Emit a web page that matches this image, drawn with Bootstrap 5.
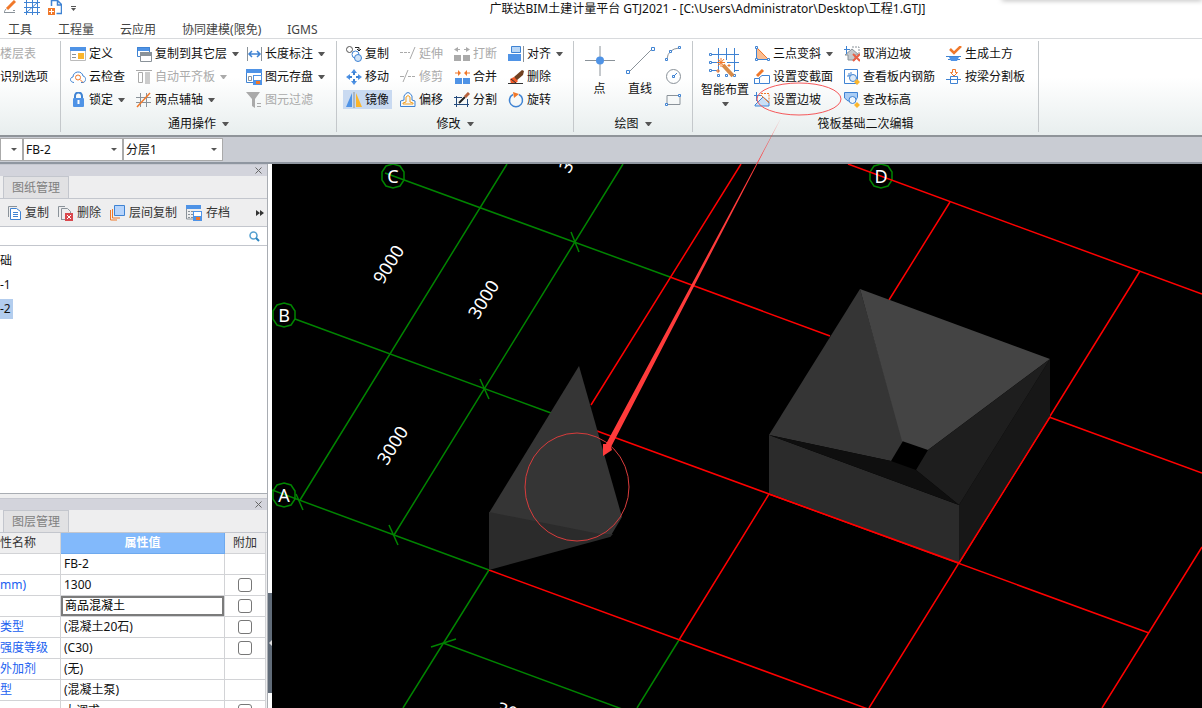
<!DOCTYPE html>
<html lang="zh-CN">
<head>
<meta charset="utf-8">
<meta name="viewport" content="width=device-width, initial-scale=1">
<title>广联达BIM土建计量平台 GTJ2021</title>
<link href="https://cdn.jsdelivr.net/npm/bootstrap@5.3.0/dist/css/bootstrap.min.css" rel="stylesheet">
<style>
  :root { --edge: #c3c6cd; --blue: #3f83d3; --orange: #f0782a; --slate: #8a9299; }
  body { font-family: "Noto Sans", "Noto Sans CJK SC", sans-serif; font-size: 12px; line-height: 16px; color: #111; background: #fff; }
  button { font: inherit; color: inherit; background: none; border: 0; padding: 0; white-space: nowrap; }
  button:disabled { color: #aaa; }
  svg { display: block; flex: none; fill: none; }
  .b { stroke: var(--blue); } .o { stroke: var(--orange); } .g { stroke: var(--slate); }
  .fb { fill: #4f93e6; } .fo { fill: var(--orange); } .fg { fill: var(--slate); } .fy { fill: #fbb52c; }
  .fw { fill: #fff; }
  .tri { width: 7px; border: solid transparent; border-width: 4px 3px 0; border-top-color: #555; flex: none; }
  :disabled .tri { border-top-color: #aaa; }

  .app-title { height: 18px; }
  .app-title h1 { font-size: 12px; line-height: 18px; padding-left: 136px; margin: 0; white-space: nowrap; }
  .app-tabs { height: 20px; gap: 26px; padding-left: 8px; }
  .app-tabs a { color: #444; text-decoration: none; line-height: 23px; white-space: nowrap; }
  .corner-shade { width: 200px; height: 2px; top: -2px; right: 0; box-shadow: 0 0 5px rgba(0,0,0,.5); }

  .ribbon { height: 99px; padding: 2px 0 3px; border-top: 1px solid #d8dadd; border-bottom: 2px solid #8f9499; background: linear-gradient(#fff 40%, #e8eeee); }
  .tool-group { border-right: 1px solid #c4c8cb; padding: 1px 6px 0; flex: none; }
  .tool-grid { display: grid; grid-auto-rows: 23px; align-items: center; }
  .tool-grid button { display: flex; align-items: center; gap: 3px; height: 19px; padding: 0 3px; justify-self: start; }
  .tool-grid button.on { background: #c9daf1; }
  .tri { margin-left: 2px; }
  .group-name { height: 26px; display: flex; align-items: center; justify-content: center; gap: 4px; }
  .tall { display: flex; flex-direction: column; align-items: center; }

  .combo-bar { height: 27px; background: #c9ccd3; border-bottom: 2px solid #8f96a0; padding-top: 1px; }
  .combo-bar select { height: 23px; border: 1px solid #aaa; border-radius: 0; padding: 0 2px; color: #111; font: inherit; appearance: none;
    background: #fff url("data:image/svg+xml,%3Csvg xmlns='http://www.w3.org/2000/svg' width='6' height='3'%3E%3Cpath d='M0 0h6L3 3z' fill='%23555'/%3E%3C/svg%3E") no-repeat right 5px center; }

  .side { width: 268px; border-right: 1px solid #a9adb3; background: #eeeeef; }
  .dock-bar { height: 12px; background: #d3d4dc; border-top: 1px solid #c6c8d0; padding-right: 5px; }
  .dock-tabs { height: 23px; padding-left: 3px; border-bottom: 1px solid var(--edge); }
  .dock-tabs button { height: 22px; width: 66px; background: #e1e1e3; border: solid var(--edge); border-width: 1px 1px 0; color: #808080; }
  .list-tools { height: 28px; border-bottom: 1px solid var(--edge); padding: 1px 3px 0 8px; color: #333; gap: 9px; }
  .list-tools button { display: flex; align-items: center; gap: 4px; }
  .find { height: 19px; border-bottom: 1px solid var(--edge); background: #fff; padding-right: 7px; }
  .find input { border: 0; outline: 0; height: 17px; font: inherit; }
  .parts { height: 248px; border-bottom: 1px solid #a9adb3; background: #fff; padding-top: 3px; }
  .parts li { height: 24px; display: flex; align-items: center; }
  .parts span { line-height: 20px; padding-right: 2px; }
  .parts .on { background: #b3cdee; }
  .props { border-collapse: separate; border-spacing: 0; width: 266px; table-layout: fixed; background: #fff; margin: 0; }
  .props th, .props td { height: 21px; padding: 0; line-height: 20px; border: solid #d2d3d6; border-width: 0 1px 1px 0; white-space: nowrap; overflow: hidden; font-weight: 400; }
  .props thead th { background: #eeeeef; text-align: center; color: #333; }
  .props thead .picked { background: #82b9fb; color: #fff; font-weight: 700; border-color: #6ea9ee; }
  .props tbody th { color: #2060f0; text-align: left; }
  .props td:nth-child(2) { padding-left: 3px; }
  .props td.editing { padding: 0; }
  .editing input { width: 100%; height: 20px; border: 2px solid #7b7b7b; padding: 0 2px; font: inherit; display: block; outline: 0; border-radius: 0; }
  .props .form-check-input { display: block; width: 14px; height: 14px; margin: 0 auto; border: 1px solid #777; border-radius: 3px; }
  .splitter { width: 4px; background: #fff; }
  .splitter button { height: 100px; width: 4px; margin-bottom: 15px; background: #606b78; }
  .scene { background: #000; }
  .scene text { fill: #fff; font-size: 18px; text-anchor: middle; }
  .axis { stroke: #008400; stroke-width: 1.5; }
  .grid-red { stroke: #f00; stroke-width: 1.5; }
  .markup { inset: 0; width: 100%; height: 100%; pointer-events: none; }
</style>
<script src="https://cdn.jsdelivr.net/npm/bootstrap@5.3.0/dist/js/bootstrap.bundle.min.js"></script>
</head>
<body class="vh-100 d-flex flex-column overflow-hidden position-relative">

<header class="flex-shrink-0">
  <div class="app-title d-flex">
    <div class="d-flex align-items-start gap-2 ps-1">
      <button aria-label="编辑"><svg width="12" height="15"><path class="o" stroke-width="3" d="M3 9l8-8"/><path class="g" d="M0 12.500h11M0 12l2-3M9 10.500h2"/></svg></button>
      <button aria-label="轴网"><svg width="16" height="15" class="b"><path d="M2.500 0v15M8.500 0v15M13.500 0v15M0 2.500h16M0 7.500h16M0 12.500h16M3 12L14 2"/></svg></button>
      <button aria-label="新建"><svg width="14" height="15"><path class="b" d="M3.500 6V.5h6l4 4v9h-5M9.500 0v5h4" stroke-width="1.500"/><path class="fo" d="M0 8h7v7H0z"/><path stroke="#fff" d="M1 11.500h5M3.500 9v5"/></svg></button>
      <button aria-label="自定义"><svg width="7" height="12"><path stroke="#555" d="M1 6.500h5"/><path fill="#555" d="M1 8h5l-2.500 3z"/></svg></button>
    </div>
    <h1 class="flex-grow-1 text-center fw-normal">广联达BIM土建计量平台 GTJ2021 - [C:\Users\Administrator\Desktop\工程1.GTJ]</h1>
  </div>
  <nav class="app-tabs d-flex">
    <a href="#">工具</a><a href="#">工程量</a><a href="#">云应用</a><a href="#">协同建模(限免)</a><a href="#">IGMS</a>
  </nav>
  <div class="corner-shade position-absolute"></div>

  <div class="ribbon d-flex overflow-hidden">
    <section class="tool-group overflow-hidden" style="width:61px;padding-left:0">
      <div class="tool-grid" style="margin-left:-3px">
        <button disabled>楼层表</button>
        <button>识别选项</button>
      </div>
    </section>

    <section class="tool-group" style="width:276px">
      <div class="tool-grid" style="grid-template-columns:66px 110px auto">
        <button><svg width="16" height="16"><path d="M.5 4v10.500h15V4" stroke="#bbb"/><path class="fb" d="M0 1h16v4H0z"/><path class="g" d="M2 8.500h4M2 11.500h4"/><path class="fy" d="M8 7h6v6H8z"/></svg>定义</button>
        <button><svg width="16" height="16"><path class="fb" d="M1 1h13v4H1z"/><path class="b" d="M1.500 1.500h12v9h-12z"/><path class="fw g" d="M4.500 6.500h11v9h-11z"/><path class="fg" d="M4 6h12v4H4z"/></svg>复制到其它层<span class="tri"></span></button>
        <button><svg width="16" height="16"><path class="g" d="M1.500 1v14M15.500 1v14"/><path class="b" d="M3 8h11M6 5L3 8l3 3M11 5l3 3-3 3" stroke-width="1.500"/></svg>长度标注<span class="tri"></span></button>

        <button><svg width="16" height="16"><path class="b" d="M4 13.500C-1 13 0 8 3 8c0-6 9-7 10-1 4 1 3 6 0 6.500h-2"/><circle class="o" cx="8" cy="8.500" r="2.500"/><path class="o" d="M10 10.500l3 3"/></svg>云检查</button>
        <button disabled><svg width="16" height="16" stroke="#aaa"><path d="M0 1.500h16M2.500 3.500h4v10h-4z"/><path d="M9 3h5v12H9z" fill="#ccc" stroke="none"/></svg>自动平齐板<span class="tri"></span></button>
        <button><svg width="16" height="16"><path class="b fw" d="M.5 1.500h15v12H.5z"/><path class="fb" d="M0 0h16v4H0z"/><path class="g" d="M2.500 7.500h3v4h-3z"/><path class="fb" d="M7 6h9v10H7z"/><path class="fw" d="M8 7h7v4H8z"/><path class="fo" d="M10 12h4v3h-4z"/></svg>图元存盘<span class="tri"></span></button>

        <button><svg width="16" height="16"><path class="b" stroke-width="2" d="M5 7V4a3 3 0 0 1 7 0v3"/><rect class="fb" x="3" y="6" width="11" height="9" rx="1"/><path stroke="#fff" stroke-width="2" d="M8.500 8v4"/></svg>锁定<span class="tri"></span></button>
        <button><svg width="16" height="16"><path class="g" d="M4.500 1v14M10.500 1v14M0 5.500h15M0 10.500h15"/><path class="o" d="M1 15L14 1" stroke-width="1.500"/></svg>两点辅轴<span class="tri"></span></button>
        <button disabled><svg width="16" height="16"><path fill="#aaa" d="M0 0h14L9 7v9l-3-2V7z"/><path stroke="#aaa" d="M11 11.500h4M11 14.500h4"/></svg>图元过滤</button>
      </div>
      <div class="group-name">通用操作<span class="tri"></span></div>
    </section>

    <section class="tool-group" style="width:237px">
      <div class="tool-grid" style="grid-template-columns:repeat(3,54px) auto">
        <button><svg width="16" height="16"><circle stroke="#555" cx="3.500" cy="3.500" r="3"/><circle class="b" cx="9.500" cy="8.500" r="3.500"/><circle cx="12" cy="12" r="3.500" class="b" fill="#cfe2f7"/><path stroke="#222" d="M9 1.500h4v3M11 3l2 2 2-2"/></svg>复制</button>
        <button disabled><svg width="16" height="16" stroke="#aaa"><path d="M0 6.500h10" stroke-dasharray="3 1"/><path d="M10 13l5-12"/></svg>延伸</button>
        <button disabled><svg width="16" height="16"><path fill="#aaa" d="M0 9h7v6H0zM9 9h7v6H9zM4 1v5L0 3.500zM12 1v5l4-2.500z"/><path stroke="#aaa" d="M3 3.500h3M10 3.500h3"/></svg>打断</button>
        <button><svg width="16" height="16"><path class="fb" d="M0 8h13v7H0z"/><path class="b" fill="#b8d6f6" d="M3.500.5h9v6h-9z"/><path class="g" d="M15.500 0v16"/></svg>对齐<span class="tri"></span></button>

        <button><svg width="16" height="16"><path class="fb" d="M8 0l3 4H5zM8 16l3-4H5zM0 8l4-3v6zM16 8l-4-3v6z"/><path class="b" stroke-width="2" d="M8 3v3M8 10v3M3 8h3M10 8h3"/></svg>移动</button>
        <button disabled><svg width="16" height="16" stroke="#aaa"><path d="M0 7.500h4M3 13L8 1"/><path d="M8 7.500h8" stroke-dasharray="3 1"/></svg>修剪</button>
        <button><svg width="16" height="16"><path class="fb" d="M1 9h7v6H1zM9 9h7v6H9z"/><path class="fo" d="M4 1v6l3-3zM13 1v6l-3-3z"/><path class="o" d="M1 4h3M13 4h3"/></svg>合并</button>
        <button><svg width="16" height="16"><path fill="#704020" d="M6 8L14 1l2 1-1 4-7 6z"/><path fill="#f05a28" d="M2 10l4-2 4 4-3 3H3z"/><path stroke="#333" d="M0 14.500h15M3 10l5 4"/></svg>删除</button>

        <button class="on"><svg width="16" height="16"><path class="fb" d="M6 1v14H0z"/><path class="fy" d="M10 1v14h6z"/><path class="g" d="M8 0v16"/></svg>镜像</button>
        <button><svg width="16" height="16"><path class="b" d="M4 8V4q4-7 8 0v4l3 1v5.500H.5V9z"/><path stroke="#f5a020" d="M6 9V5q2-3 4 0v5l3 1v1H3v-1l3-1z"/></svg>偏移</button>
        <button><svg width="16" height="16"><path stroke="#234a7c" d="M2.500 4v11M0 5.500h8M0 12.500h15M13.500 7v8"/><path stroke="#222" stroke-width="2" d="M5 11l6-6"/><path stroke="#b5603c" stroke-width="3" d="M11 5l4-4"/></svg>分割</button>
        <button><svg width="16" height="16"><path class="b" stroke-width="1.500" d="M5 2.500a6.500 6.500 0 1 0 6 0"/><path class="fo" d="M5 0l6 2-5 4z"/></svg>旋转</button>
      </div>
      <div class="group-name">修改<span class="tri"></span></div>
    </section>

    <section class="tool-group" style="width:119px">
      <div class="d-flex justify-content-between px-1" style="height:69px">
        <button class="tall pt-1"><svg width="31" height="31" class="mb-1"><path class="g" d="M16 0v30M1 14.500h30"/><circle class="fb" cx="16" cy="14.500" r="4"/></svg>点</button>
        <button class="tall pt-1"><svg width="31" height="31" class="mb-1"><path class="g" d="M4 26L27 3"/><path class="b fw" d="M1.500 24.500h3v3h-3zM26.500 1.500h3v3h-3z"/></svg>直线</button>
        <div class="d-flex flex-column justify-content-around">
          <button aria-label="弧"><svg width="17" height="17"><path class="g" d="M2 14Q3 4 14 3"/><path class="b fw" d="M.5 13.500h2v2h-2zM13.500 1.500h2v2h-2zM4.500 5.500h2v2h-2z"/></svg></button>
          <button aria-label="圆"><svg width="17" height="17"><circle class="g" cx="8.500" cy="8.500" r="7"/><path class="b" d="M9 8l3-3M7.500 7.500h2v2h-2z"/></svg></button>
          <button aria-label="矩形"><svg width="17" height="17"><path class="g" d="M2 4.500h13v9H2z"/><path class="b fw" d="M.5 12.500h2v2h-2zM13.500 3.500h2v2h-2z"/></svg></button>
        </div>
      </div>
      <div class="group-name">绘图<span class="tri"></span></div>
    </section>

    <section class="tool-group" style="width:346px">
      <div class="d-flex">
        <button class="tall" style="width:52px;padding-top:6px"><svg width="32" height="30" class="mb-1"><path class="b" d="M9.500 0v24M17.500 0v12M25.500 0v24M2 6.500h28M2 14.500h10M18 14.500h12M2 22.500h6M25 22.500h5M.5 5.500h2v2h-2zM.5 13.500h2v2h-2zM.5 21.500h2v2h-2zM8.500 26.500h2v2h-2zM16.500 26.500h2v2h-2zM24.500 26.500h2v2h-2z"/><path stroke="#d88b48" stroke-width="4" d="M14 17l10 11"/><path class="o" d="M12 10v9M8 14.500h8M9 11l6 7M15 11l-6 7M9 21v4M7 23h4M20 16v3M18.500 17.500h3"/></svg><span>智能布置</span><span class="tri mt-1 ms-0"></span></button>
        <div class="tool-grid" style="grid-template-columns:90px 102px auto">
          <button><svg width="16" height="16"><path fill="#f9bd92" d="M3 1l12 13H3z"/><path class="o" d="M3 2l11 11"/><path class="b fw" d="M1.500.5h2v2h-2zM1.500 12.500h2v2h-2zM13.500 12.500h2v2h-2z"/><path class="b" d="M2.500 3v9M4 13.500h9"/></svg>三点变斜<span class="tri"></span></button>
          <button><svg width="16" height="16"><path class="g" d="M8 1h7v8" stroke-dasharray="2 1"/><path fill="#c5c9cc" class="g" d="M1 9l7-6 7 6h-4v5H4V9z"/><path class="b" d="M2.500 0v8M0 3.500h6"/><path stroke="#e96046" stroke-width="2" d="M9 8l7 7M16 8l-7 7"/></svg>取消边坡</button>
          <button><svg width="16" height="16"><path class="o" stroke-width="2.500" d="M4 3l4 4 7-7"/><path class="b" d="M0 10.500h15M2 13.500h12"/><path class="fb" d="M3 11h10l-2 4H5z"/></svg>生成土方</button>

          <button><svg width="16" height="16"><path class="o" stroke-width="3" d="M3 7l6-6"/><path class="b" d="M.5 15V9.500h5v5H1M5 9l3-2.500h7.500v8H6"/></svg>设置变截面</button>
          <button><svg width="16" height="16"><path class="b" d="M.5.5h13v14H.5zM3 7h8M7 3v9M5 4v3"/><circle class="b" fill="#dceaf8" cx="9" cy="9" r="3.500"/><path class="fy" d="M13 10l3 3-3 3-3-3z"/></svg>查看板内钢筋</button>
          <button><svg width="16" height="16"><path class="b fw" d="M0 10.500h15M4.500 7.500h7v7h-7z"/><path class="o" d="M6.500.5h3v3h2L8 7 4.500 3.500h2z"/></svg>按梁分割板</button>

          <button><svg width="16" height="16"><path fill="#c9def5" class="b" d="M1 13L9 5l6 5v4H1z"/><path class="b" d="M2.500 0v9M0 3.500h7"/><path class="o" d="M7 1.500h8v8" stroke-dasharray="2 1"/><path class="o" d="M7 3l8 8"/></svg>设置边坡</button>
          <button><svg width="16" height="16"><path fill="#a9cdf5" class="b" d="M.5.500h13v5L11 9H4L.5 6z"/><circle fill="#eef5fc" class="b" cx="8.500" cy="8" r="3.500"/><path class="fy" d="M13 10l3 3-3 3-3-3z"/></svg>查改标高</button>
        </div>
      </div>
      <div class="group-name">筏板基础二次编辑</div>
    </section>
  </div>

  <div class="combo-bar d-flex">
    <select aria-label="类别" style="width:23px"><option></option></select>
    <select aria-label="构件" style="width:100px"><option>FB-2</option></select>
    <select aria-label="分层" style="width:100px"><option>分层1</option></select>
  </div>
</header>

<main class="d-flex flex-grow-1 overflow-hidden">
  <aside class="side flex-shrink-0 overflow-hidden">
    <div class="dock-bar d-flex justify-content-end align-items-center"><button aria-label="关闭"><svg width="7" height="7"><path stroke="#666" d="M.5.5l6 6M6.500.5l-6 6"/></svg></button></div>
    <div class="dock-tabs"><button>图纸管理</button></div>
    <div class="list-tools d-flex align-items-center">
      <button><svg width="13" height="16"><path class="g" d="M.5 12V1.500H9"/><path class="b fw" d="M2.500 3.500h6l4 3v8h-10z"/><path class="b" d="M5 7.500h5M5 9.500h5M5 11.500h5"/></svg>复制</button>
      <button><svg width="15" height="16"><path class="g" d="M.5 12V1.500H7M3.500 14.500v-11h6l3 3v2M3 14.500h4"/><path fill="#d9484d" d="M7 8h8v8H7z"/><path stroke="#fff" d="M9 10l4 4M13 10l-4 4"/></svg>删除</button>
      <button><svg width="15" height="16"><path class="o" d="M.5 5v10H7"/><path class="o" d="M2.500 4v9H10"/><path class="b" fill="#b7d4fb" d="M4.500.5h10v10h-10z"/></svg>层间复制</button>
      <button><svg width="16" height="16"><path class="g" d="M.5 3v11H8"/><path class="fb" d="M0 0h15v4H0z"/><path class="g" d="M2 6.500h10M2 9.500h5M2 12.500h5" stroke-dasharray="2 1"/><path class="fb" d="M7 6h9v10H7z"/><path class="fw" d="M8 7h7v4H8z"/><path class="fo" d="M10 12h4v3h-4z"/></svg>存档</button>
      <button class="ms-auto" aria-label="更多"><svg width="8" height="6"><path fill="#333" d="M0 0l4 3-4 3zM4 0l4 3-4 3z"/></svg></button>
    </div>
    <div class="find d-flex align-items-center">
      <input class="flex-grow-1" type="text" aria-label="搜索构件">
      <button aria-label="搜索"><svg width="11" height="11"><circle stroke="#55a0d0" stroke-width="1.500" cx="4.500" cy="4.500" r="3.500"/><path stroke="#2c85c0" stroke-width="2" d="M7 7l3 3"/></svg></button>
    </div>
    <ul class="parts list-unstyled mb-1">
      <li><span>础</span></li>
      <li><span>-1</span></li>
      <li><span class="on">-2</span></li>
    </ul>
    <div class="dock-bar d-flex justify-content-end align-items-center"><button aria-label="关闭"><svg width="7" height="7"><path stroke="#666" d="M.5.5l6 6M6.500.5l-6 6"/></svg></button></div>
    <div class="dock-tabs"><button>图层管理</button></div>
    <table class="props">
      <colgroup><col style="width:61px"><col style="width:164px"><col style="width:41px"></colgroup>
      <thead><tr><th class="text-start">性名称</th><th class="picked">属性值</th><th>附加</th></tr></thead>
      <tbody>
        <tr><th></th><td>FB-2</td><td></td></tr>
        <tr><th>mm)</th><td>1300</td><td><input class="form-check-input" type="checkbox" aria-label="厚度附加"></td></tr>
        <tr><th></th><td class="editing"><input type="text" value="商品混凝土" aria-label="材质"></td><td><input class="form-check-input" type="checkbox" aria-label="材质附加"></td></tr>
        <tr><th>类型</th><td>(混凝土20石)</td><td><input class="form-check-input" type="checkbox" aria-label="类型附加"></td></tr>
        <tr><th>强度等级</th><td>(C30)</td><td><input class="form-check-input" type="checkbox" aria-label="强度等级附加"></td></tr>
        <tr><th>外加剂</th><td>(无)</td><td></td></tr>
        <tr><th>型</th><td>(混凝土泵)</td><td></td></tr>
        <tr><th></th><td>大调求</td><td><input class="form-check-input" type="checkbox" aria-label="附加"></td></tr>
      </tbody>
    </table>
  </aside>
  <div class="splitter d-flex align-items-end flex-shrink-0"><button aria-label="折叠面板"><svg width="4" height="6"><path fill="#ddd" d="M4 0v6L1 3z"/></svg></button></div>

  <div class="scene flex-grow-1 overflow-hidden">
    <svg class="w-100 h-100" viewBox="272 164 930 544" preserveAspectRatio="xMidYMid slice" role="img" aria-label="三维视图">
      <defs><path id="bubble" d="M0-12L7-10 11-4V4L7 10 0 12-7 10-11 4V-4L-7-10z"/></defs>
      <g class="axis">
        <path d="M385 173L670 277M295 319L551 413M272 490L489 570M443 643L622 709"/>
        <path d="M507 164L300 500M623 164L394 535M489 570L403 708M679 640L637 708"/>
        <path d="M571 232l8 20M480 379l9 20M389 525l9 20M296 494l7 16M431 647l25-8"/>
        <use href="#bubble" x="393" y="176"/><use href="#bubble" x="284" y="315"/>
        <use href="#bubble" x="284" y="495"/><use href="#bubble" x="881" y="176"/>
      </g>
      <g class="grid-red">
        <path d="M848 164L1202 294M670 277L830 336M597 431L1149 633M489 570L868 709M1049 417L1202 473"/>
        <path d="M741 164L591 405M950 202L889 300M1140 271L869 708M769 494L679 640M1202 547L1102 708"/>
      </g>
      <path fill="#353535" d="M579 366L622 517 610 537 489 513z"/>
      <path fill="#2b2b2b" d="M489 512L600 534 613 534 610 537 489 570z"/>
      <path fill="#2b2b2b" d="M769 435L959 505V563L769 493z"/>
      <path fill="#171717" d="M1050 359V416L959 563V505z"/>
      <path fill="#353535" d="M860 289L769 435 891 461 903 441z"/>
      <path fill="#444" d="M860 289L1050 359 928 450 902 441z"/>
      <path fill="#1e1e1e" d="M1050 359L928 450 916 470 959 505z"/>
      <path fill="#0f0f0f" d="M769 435L891 461 916 470 959 505z"/>
      <path class="grid-red" d="M769 494L959 563 1050 417"/>
      <text x="393" y="183">C</text><text x="284" y="322">B</text>
      <text x="284" y="502">A</text><text x="881" y="183">D</text>
      <text transform="translate(388 264) rotate(-58)" y="7">9000</text>
      <text transform="translate(483 299) rotate(-58)" y="7">3000</text>
      <text transform="translate(392 445) rotate(-58)" y="7">3000</text>
      <text transform="translate(574 153) rotate(-58)" y="7">3000</text>
      <text transform="translate(517 714) rotate(20)" y="7">3000</text>
    </svg>
  </div>
</main>

<svg class="markup position-absolute" aria-hidden="true">
  <ellipse cx="799" cy="99" rx="42" ry="16" stroke="#f5585a"/>
  <ellipse cx="577" cy="487" rx="52" ry="54" stroke="#d83c3c"/>
  <path fill="#ff3b3b" d="M781 118L606 444 603 444 603 456 612 450 611 447z"/>
</svg>
</body>
</html>
